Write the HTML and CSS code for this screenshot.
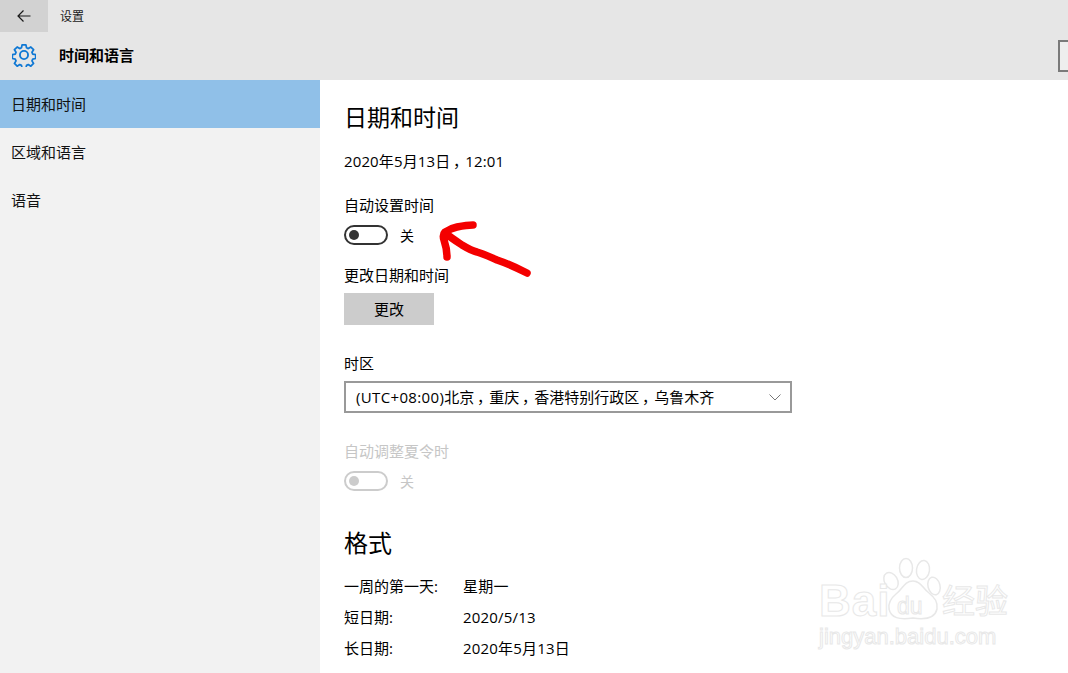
FILE: index.html
```html
<!DOCTYPE html>
<html lang="zh-CN">
<head>
<meta charset="utf-8">
<title>设置</title>
<link rel="stylesheet" href="styles.css">
</head>
<body>
<div class="app">
  <header class="header">
    <div class="topbar">
      <div class="back">
        <svg width="16" height="16" viewBox="0 0 16 16"><path d="M14.5 8H2M7.5 2.5 2 8l5.500 5.500" fill="none" stroke="#1a1a1a" stroke-width="1.200"/></svg>
      </div>
      <div class="app-title">设置</div>
    </div>
    <div class="titlebar">
      <svg class="gear" width="24" height="24" viewBox="0 0 26 26"><g fill="none" stroke="#0f78d4" stroke-width="2" stroke-linejoin="round"><path d="M10.800 1.500h4.400l.7 3.300 2 .9 2.900-1.800 3.100 3.100-1.800 2.900.9 2 3.300.7v4.400l-3.300.7-.9 2 1.800 2.900-3.100 3.100-2.900-1.800-2 .9-.7 3.300h-4.400l-.7-3.300-2-.9-2.900 1.800-3.100-3.100 1.800-2.900-.9-2-3.300-.7v-4.400l3.300-.7.9-2-1.800-2.900 3.100-3.100 2.900 1.800 2-.9z" transform="translate(.65 .65) scale(.95)"/><circle cx="13" cy="13" r="4.400"/></g></svg>
      <h1 class="section-name">时间和语言</h1>
      <div class="search-edge"></div>
    </div>
  </header>
  <div class="body">
    <nav class="sidebar">
      <div class="nav-item active">日期和时间</div>
      <div class="nav-item">区域和语言</div>
      <div class="nav-item">语音</div>
    </nav>
    <main class="content">
      <h2 class="page-title">日期和时间</h2>
      <p class="now">2020年5月13日<span class="cm">，</span>12:01</p>
      <div class="label first">自动设置时间</div>
      <div class="toggle-row">
        <span class="toggle"><span class="knob"></span></span><span class="toggle-text">关</span>
      </div>
      <div class="label change-label">更改日期和时间</div>
      <button class="change-btn">更改</button>
      <div class="label zone-label">时区</div>
      <div class="select">
        <span><span class="lat">(UTC+08:00)</span>北京<span class="cm">，</span>重庆<span class="cm">，</span>香港特别行政区<span class="cm">，</span>乌鲁木齐</span>
        <svg width="12" height="7" viewBox="0 0 12 7"><path d="M.5.500 6 6l5.500-5.500" fill="none" stroke="#777" stroke-width="1"/></svg>
      </div>
      <div class="label dst-label disabled">自动调整夏令时</div>
      <div class="toggle-row disabled">
        <span class="toggle"><span class="knob"></span></span><span class="toggle-text">关</span>
      </div>
      <h2 class="format-title">格式</h2>
      <dl class="formats">
        <div class="format-row"><dt>一周的第一天:</dt><dd>星期一</dd></div>
        <div class="format-row"><dt>短日期:</dt><dd>2020/5/13</dd></div>
        <div class="format-row"><dt>长日期:</dt><dd>2020年5月13日</dd></div>
      </dl>
    </main>
  </div>
  <svg class="arrow" width="100" height="60" viewBox="0 0 100 60"><path d="M37 5C31 5 26 6 21 7 16 8 12 10 9 12 7 14 7 17 8 20 10 26 11 31 11 37M9 13C14 17 20 21 26 25 31 28 36 31 41 32 48 34 54 37 61 40 70 43 81 48 91 53" fill="none" stroke="#f40000" stroke-width="7.500" stroke-linecap="round" stroke-linejoin="round"/></svg>
  <div class="watermark">
    <svg class="paw" width="70" height="70" viewBox="880 555 70 70"><g fill="#fff" stroke="#e8e8e8" stroke-width="1.500"><ellipse cx="891" cy="581" rx="6.500" ry="9" transform="rotate(-30 891 581)"/><ellipse cx="906" cy="568" rx="6.500" ry="9.500"/><ellipse cx="923" cy="570" rx="6.500" ry="9.500" transform="rotate(8 923 570)"/><ellipse cx="934" cy="586" rx="6" ry="9" transform="rotate(-15 934 586)"/><path d="M913 581C904 581 903 589 896 594 890 599 888 603 889 609 891 618 899 620 913 618 926 620 935 618 937 609 938 602 935 598 929 593 923 589 921 581 913 581Z"/></g></svg>
    <span class="wm-bai">Bai</span>
    <span class="wm-du">du</span>
    <span class="wm-cn">经验</span>
    <span class="wm-url">jingyan.baidu.com</span>
  </div>
</div>
</body>
</html>
```
FILE: styles.css
```css
* { box-sizing: border-box; }
html, body { margin: 0; padding: 0; }
body {
  width: 1068px;
  height: 673px;
  overflow: hidden;
  background: #fff;
  font-family: "Open Sans", "Noto Sans CJK SC", sans-serif;
  color: #000;
}
.app { position: relative; width: 1068px; height: 673px; overflow: hidden; }
.header { height: 80px; background: #e6e6e6; }
.topbar { display: flex; height: 31px; align-items: center; }
.back { width: 48px; height: 32px; background: #d2d2d2; display: flex; align-items: center; justify-content: center; flex: none; }
.app-title { margin-left: 12px; font-size: 12px; color: #1a1a1a; }
.titlebar { height: 49px; display: flex; align-items: center; padding: 0 0 2px 12px; position: relative; }
.gear { flex: none; }
.section-name { margin: 0 0 0 23px; font-size: 15px; font-weight: 700; }
.search-edge {
  position: absolute; left: 1058px; top: 9px; width: 20px; height: 32px;
  background: #eee; border: 2px solid #7a7a7a;
}
.body { display: flex; height: 593px; }
.sidebar { width: 320px; background: #f2f2f2; flex: none; }
.nav-item { height: 48px; line-height: 48px; padding-left: 11px; font-size: 15px; color: #111; }
.nav-item.active { background: #90c0e8; }
.content { padding: 19px 0 0 344px; margin-left: -320px; flex: 1; position: relative; }
.page-title { margin: 0; font-size: 23px; font-weight: 400; line-height: 36px; }
.now { margin: 15px 0 0; font-size: 15px; line-height: 22px; letter-spacing: .13px; }
.cm { display: inline-block; width: 15px; text-align: center; font-feature-settings: "palt"; letter-spacing: 0; }
.lat { letter-spacing: .35px; }
.label { font-size: 15px; line-height: 20px; }
.first { margin-top: 23px; }
.toggle-row { display: flex; align-items: center; height: 22px; margin-top: 9px; font-size: 14px; }
.toggle { width: 44px; height: 20px; border: 2px solid #333; border-radius: 10px; display: flex; align-items: center; padding-left: 3px; flex: none; }
.knob { width: 10px; height: 10px; border-radius: 50%; background: #333; }
.toggle-text { margin-left: 12px; }
.change-label { margin-top: 19px; }
.change-btn { display: block; width: 90px; height: 32px; margin-top: 8px; border: 0; padding: 0 0 2px; background: #ccc; font: inherit; font-size: 15px; color: #000; }
.zone-label { margin-top: 28px; }
.select { width: 448px; height: 32px; margin-top: 8px; border: 2px solid #999; display: flex; align-items: center; justify-content: space-between; padding: 0 9px 2px 10px; font-size: 15px; }
.select svg { margin-top: 2px; }
.dst-label { margin-top: 28px; }
.disabled { color: #c6c6c6; }
.dst-label + .toggle-row { margin-top: 9px; }
.disabled .toggle { border-color: #ccc; }
.disabled .knob { background: #ccc; }
.format-title { margin: 34px 0 0; font-size: 24px; font-weight: 400; line-height: 34px; }
.formats { margin: 16px 0 0; }
.format-row { display: flex; height: 31px; font-size: 15px; line-height: 20px; }
.format-row dt { width: 119px; }
.format-row dd { margin: 0; letter-spacing: .2px; }
.arrow { position: absolute; left: 436px; top: 220px; }
.watermark { position: absolute; left: 0; top: 0; width: 1068px; height: 673px; pointer-events: none; }
.watermark span { position: absolute; color: #fff; -webkit-text-stroke: 1px #e8e8e8; font-family: "Liberation Sans", "Noto Sans CJK SC", sans-serif; line-height: 1; white-space: nowrap; }
.paw { position: absolute; left: 880px; top: 555px; }
.wm-bai { left: 819px; top: 579px; font-size: 44px; font-weight: 700; letter-spacing: 1px; }
.wm-du { left: 897px; top: 595px; font-size: 23px; }
.wm-cn { left: 942px; top: 585px; font-size: 33px; }
.wm-url { left: 819px; top: 626px; font-size: 22px; }
```
